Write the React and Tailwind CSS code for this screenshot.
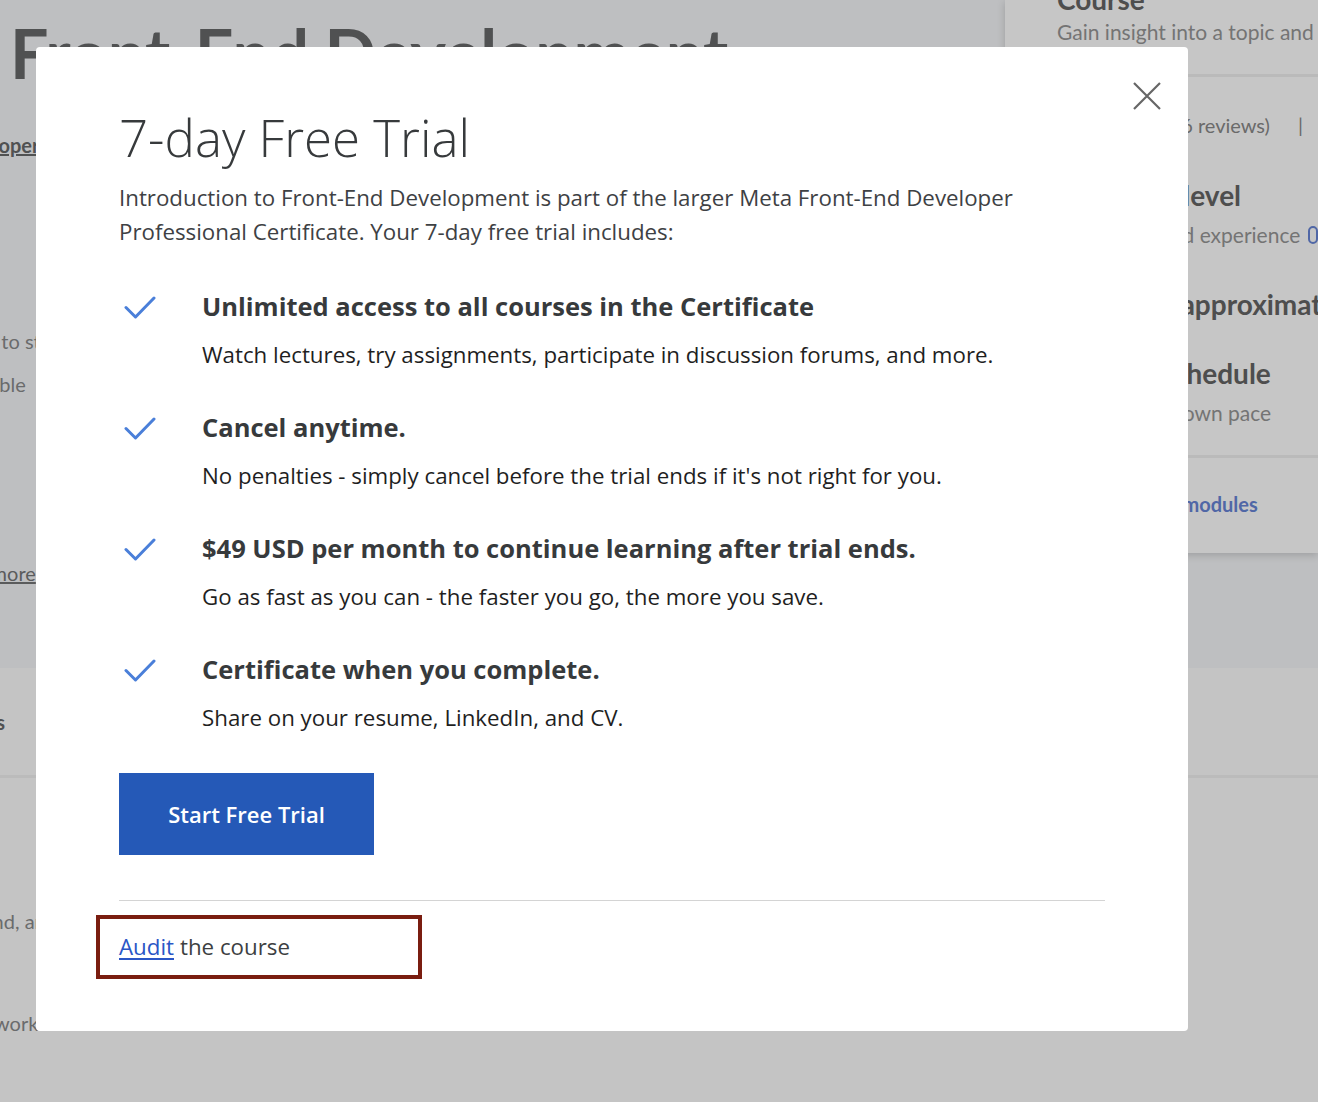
const perks = [
  {
    title: 'Unlimited access to all courses in the Certificate',
    body: 'Watch lectures, try assignments, participate in discussion forums, and more.',
  },
  {
    title: 'Cancel anytime.',
    body: "No penalties - simply cancel before the trial ends if it's not right for you.",
  },
  {
    title: '$49 USD per month to continue learning after trial ends.',
    body: 'Go as fast as you can - the faster you go, the more you save.',
  },
  {
    title: 'Certificate when you complete.',
    body: 'Share on your resume, LinkedIn, and CV.',
  },
];

function Check() {
  return (
    <svg width="32" height="24" viewBox="0 0 32 24" fill="none" className="mt-[6px] ml-[5px]">
      <path d="M2 11.5 L11.5 21 L30 2" stroke="#4a7fd9" strokeWidth="3" strokeLinecap="round" strokeLinejoin="round" />
    </svg>
  );
}

function BackgroundPage() {
  return (
    <div className="flex h-full flex-col font-['Lato','Open_Sans',sans-serif]">
      <div className="flex h-[668px] shrink-0 bg-[#bebfc1]">
        <div className="flex min-w-0 flex-1 flex-col whitespace-nowrap">
          <h1 className="mt-[19px] ml-[10px] text-[68px] leading-none font-bold tracking-[-0.5px] text-[#505152]">
            Front-End Development
          </h1>
          <a className="mt-[43px] -ml-[53px] text-[20px] leading-[30px] font-bold text-[#505152] underline">Developers</a>
          <p className="mt-[166px] -ml-[95px] text-[20px] leading-[30px] text-[#6a6b6c]">Learn how to start building</p>
          <p className="mt-[13px] -ml-[50px] text-[20px] leading-[30px] text-[#6a6b6c]">available</p>
          <a className="mt-[159px] -ml-[63px] text-[20px] leading-[30px] text-[#5a5b5c] underline">Learn more</a>
        </div>
        <div className="h-[553px] w-[313px] shrink-0 bg-[#c6c6c6] whitespace-nowrap shadow-[0_2px_8px_rgba(0,0,0,0.18)]">
          <div className="pl-[52px]">
            <p className="-mt-[19px] text-[28px] leading-[36px] font-bold text-[#4e4e4e]">Course</p>
            <p className="text-[21px] leading-[30px] text-[#747474]">Gain insight into a topic and learn the fundamentals</p>
          </div>
          <div className="mt-[27px] h-[3px] bg-[#bababa]" />
          <div className="pl-[52px]">
            <p className="mt-[33px] flex items-center gap-[8px] text-[20px] leading-[30px] text-[#6a6a6a]">
              <span className="font-bold text-[#4e4e4e]">4.7</span>
              <span className="text-[#6b7bab]">★</span>
              <span className="ml-[6px]">(15,836 reviews)</span>
              <span className="ml-[20px]">|</span>
            </p>
            <p className="mt-[37px] ml-[8px] text-[28px] leading-[36px] font-bold text-[#4e4e4e]">Beginner level</p>
            <p className="mt-[7px] flex items-center gap-[8px] text-[21px] leading-[30px] text-[#747474]">
              Recommended experience
              <span className="inline-block h-[18px] w-[18px] rounded-full border-2 border-[#5067a6]" />
            </p>
            <p className="mt-[36px] text-[28px] leading-[36px] font-bold text-[#4e4e4e]">18 hours (approximately)</p>
            <p className="mt-[33px] text-[28px] leading-[36px] font-bold text-[#4e4e4e]">Flexible schedule</p>
            <p className="mt-[7px] text-[21px] leading-[30px] text-[#747474]">Learn at your own pace</p>
          </div>
          <div className="mt-[27px] h-[3px] bg-[#bababa]" />
          <p className="mt-[31px] pl-[52px] text-[20px] leading-[30px] font-bold text-[#5067a6]">Explore all 12 modules</p>
        </div>
      </div>
      <div className="flex h-[110px] shrink-0 items-center border-b-[3px] border-[#bbbbbb] whitespace-nowrap">
        <span className="-ml-[72px] text-[20px] font-bold text-[#505152]">Modules</span>
      </div>
      <p className="mt-[128px] -ml-[88px] text-[20px] leading-[30px] whitespace-nowrap text-[#6a6b6c]">background, and</p>
      <p className="mt-[72px] -ml-[6px] text-[20px] leading-[30px] whitespace-nowrap text-[#6a6b6c]">worked</p>
    </div>
  );
}

export default function App() {
  return (
    <div className="relative h-[1102px] w-full overflow-hidden bg-[#c4c4c4]">
      <BackgroundPage />
      <div className="absolute top-[47px] left-[36px] flex h-[984px] w-[1152px] flex-col rounded-[4px] bg-white px-[83px] pt-[60px] font-['Open_Sans',sans-serif]">
        <button className="absolute top-[35px] right-[27px]">
          <svg width="28" height="28" viewBox="0 0 28 28" fill="none">
            <path d="M1 1 L27 27 M27 1 L1 27" stroke="#666666" strokeWidth="2.2" />
          </svg>
        </button>
        <h2 className="text-[51px] leading-[60px] font-light text-[#373a3c]">7-day Free Trial</h2>
        <p className="mt-[14px] text-[22.3px] leading-[34px] text-[#3e4144]">
          Introduction to Front-End Development is part of the larger Meta Front-End Developer Professional
          Certificate. Your 7-day free trial includes:
        </p>
        <ul className="mt-[41px] flex flex-col gap-[41px]">
          {perks.map((perk) => (
            <li key={perk.title} className="flex">
              <div className="w-[83px] shrink-0">
                <Check />
              </div>
              <div>
                <p className="text-[25.5px] leading-[32px] font-bold text-[#373a3c]">{perk.title}</p>
                <p className="mt-[18px] text-[22.3px] leading-[30px] text-[#1f1f1f]">{perk.body}</p>
              </div>
            </li>
          ))}
        </ul>
        <button className="mt-[40px] h-[82px] w-[255px] bg-[#2559b7] text-[22px] font-semibold text-white">
          Start Free Trial
        </button>
        <div className="mt-[45px] h-px bg-[#d4d4d4]" />
        <div className="mt-[14px] -ml-[23px] flex h-[64px] w-[326px] items-center border-4 border-[#7a1d10] pl-[19px] text-[22.3px]">
          <a className="text-[#2a56c6] underline underline-offset-[3px]">Audit</a>
          <span className="ml-[6px] text-[#3d3f42]">the course</span>
        </div>
      </div>
    </div>
  );
}
